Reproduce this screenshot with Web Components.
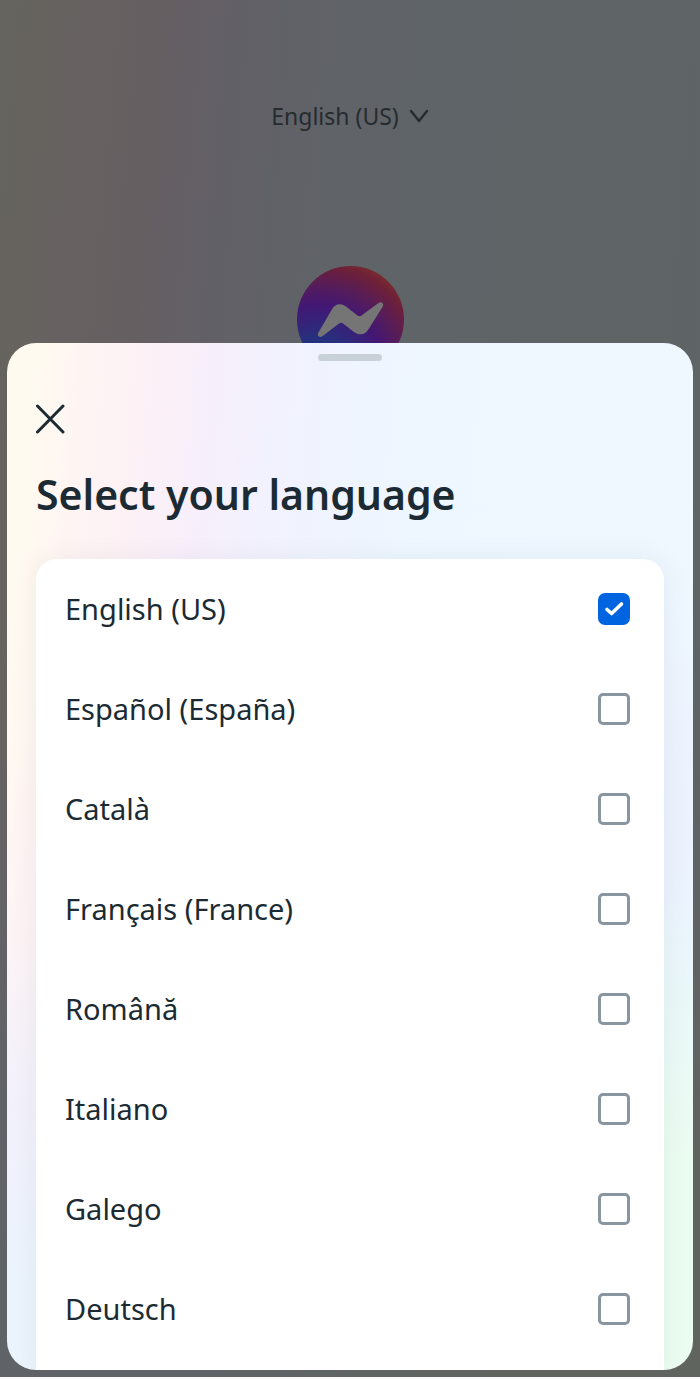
<!DOCTYPE html>
<html lang="en">
<head>
<meta charset="utf-8">
<meta name="viewport" content="width=device-width, initial-scale=1">
<title>Select your language</title>
<style>
body { margin: 0; background: #fafafa; color: #1c2b33; font-family: "Noto Sans", sans-serif; }
</style>
</head>
<body>
<language-screen>
  <login-backdrop slot="backdrop" locale="English (US)"></login-backdrop>
  <bottom-sheet heading="Select your language">
    <language-list>
      <language-option lang="en" checked>English (US)</language-option>
      <language-option lang="es">Español (España)</language-option>
      <language-option lang="ca">Català</language-option>
      <language-option lang="fr">Français (France)</language-option>
      <language-option lang="ro">Română</language-option>
      <language-option lang="it">Italiano</language-option>
      <language-option lang="gl">Galego</language-option>
      <language-option lang="de">Deutsch</language-option>
    </language-list>
  </bottom-sheet>
</language-screen>
<script>
class BaseElement extends HTMLElement {
  render(html) {
    const t = document.createElement('template');
    t.innerHTML = html;
    this.attachShadow({ mode: 'open' }).append(t.content.cloneNode(true));
  }
}

customElements.define('language-screen', class extends BaseElement {
  connectedCallback() {
    this.render(`
      <style>
        :host { display: grid; grid-template-columns: minmax(0, 1fr); }
        ::slotted(*), .overlay { grid-area: 1 / 1; }
        .overlay { z-index: 1; display: flex; flex-direction: column; padding: 343px 7px 7px; }
      </style>
      <slot name="backdrop"></slot>
      <div class="overlay"><slot></slot></div>`);
  }
});

customElements.define('login-backdrop', class extends BaseElement {
  connectedCallback() {
    this.render(`
      <style>
        :host { display: flex; flex-direction: column; align-items: center; gap: 133px; padding-top: 99px;
          background:
            radial-gradient(ellipse 500px 550px at 100% 100%, #5f645f 0%, #5f645f 40%, #5f645f00 100%),
            linear-gradient(to bottom, #61626700 50%, #616267 75%, #5f6367 95%),
            linear-gradient(95deg, #65645e 0%, #66635f 6%, #676161 12%, #665f62 20%, #636067 27%, #606267 37%, #5f6468 52%, #5e6365 100%); }
        button { display: flex; align-items: center; gap: 10px; border: 0; padding: 0; background: none;
          color: #262b30; font: inherit; font-size: 23px; line-height: 34px; }
        svg { display: block; }
      </style>
      <button type="button"><span></span>
        <svg width="20" height="14" viewBox="0 0 20 14" fill="none" stroke="currentColor" stroke-width="2.4" stroke-linecap="round" stroke-linejoin="round" aria-hidden="true"><path d="M2 2l8 10L18 2"/></svg>
      </button>
      <svg width="107" height="107" viewBox="0 0 107 107" role="img" aria-label="Messenger">
        <defs>
          <radialGradient id="g" gradientUnits="userSpaceOnUse" cx="20" cy="106" r="118">
            <stop offset="0" stop-color="#143a80"/><stop offset=".3" stop-color="#282f7d"/>
            <stop offset=".57" stop-color="#431774"/><stop offset=".72" stop-color="#541c5c"/>
            <stop offset=".9" stop-color="#6d2039"/><stop offset="1" stop-color="#7a2d2c"/>
          </radialGradient>
        </defs>
        <circle cx="53.5" cy="53.5" r="53.5" fill="url(#g)"/>
        <path fill="#757575" d="M21.500 66.500L34.500 44C37.500 38 43.500 36.500 49 40.500L60.500 49.500Q62.500 51 64.500 49.500L81.500 37C84 35 87.500 37.500 85.500 41L72 62.500C68.500 69 62.500 70 57 66L46 57.500Q44 56 42 57.500L25 70.500C22.500 72 19.500 69.500 21.500 66.500Z"/>
      </svg>`);
    this.shadowRoot.querySelector('span').textContent = this.getAttribute('locale');
  }
});

customElements.define('bottom-sheet', class extends BaseElement {
  connectedCallback() {
    this.render(`
      <style>
        :host { display: block; overflow: hidden; border-radius: 29px;
          background:
            radial-gradient(ellipse 300px 480px at 100% 100%, #ebfcf1 0%, #ebfcf1 45%, #ebfcf100 100%),
            linear-gradient(to bottom, #fdf2f600 35%, #fdf2f6b0 56%, #f2f1fc 75%, #ebf4fd 92%) 0 0 / 50% 100% no-repeat,
            linear-gradient(to bottom, #ecf2fe00 20%, #ecf2fe 45%, #eaf5fe 65%) 100% 0 / 50% 100% no-repeat,
            linear-gradient(95deg, #fffaf0 4%, #fef5f3 10%, #fdf1f5 17%, #f7effb 26%, #f1f2fe 36%, #eef6ff 52%, #eff8ff 100%); }
        section { display: flex; flex-direction: column; padding: 11px 29px 0; }
        .grip { align-self: center; width: 64px; height: 7px; border-radius: 4px; background: #c9d1d8; }
        button { align-self: flex-start; margin-top: 43px; padding: 0; border: 0; background: none; color: inherit; }
        svg { display: block; }
        h1 { margin: 31px 0 36px; font-size: 41px; line-height: 58px; font-weight: 600; }
      </style>
      <section aria-labelledby="title">
        <div class="grip"></div>
        <button type="button" aria-label="Close">
          <svg width="30" height="30" viewBox="0 0 30 30" fill="none" stroke="currentColor" stroke-width="3" stroke-linecap="round"><path d="M1.500 2l25.500 26M27 2L1.500 28"/></svg>
        </button>
        <h1 id="title"></h1>
        <slot></slot>
      </section>`);
    this.shadowRoot.querySelector('h1').textContent = this.getAttribute('heading');
  }
});

customElements.define('language-list', class extends BaseElement {
  connectedCallback() {
    this.render(`
      <style>
        :host { display: flex; flex-direction: column; padding-bottom: 11px; background: #fff;
          border-radius: 21px 21px 0 0; box-shadow: 0 0 28px #1c2b3310; }
      </style>
      <slot></slot>`);
  }
});

customElements.define('language-option', class extends BaseElement {
  connectedCallback() {
    this.render(`
      <style>
        :host { display: block; }
        label { display: flex; align-items: center; justify-content: space-between; height: 100px; padding: 0 34px 0 29px;
          font-size: 29px; line-height: 40px; font-weight: 450; }
        input { appearance: none; box-sizing: border-box; width: 32px; height: 32px; margin: 0; border: 3px solid #8a969f; border-radius: 5px; }
        input:checked { border-color: #0064e0; background: #0064e0; border-radius: 7px; }
        .box { display: grid; }
        .box > * { grid-area: 1 / 1; place-self: center; }
        svg { pointer-events: none; visibility: hidden; }
        input:checked + svg { visibility: visible; }
      </style>
      <label><slot></slot>
        <span class="box"><input type="checkbox">
          <svg width="32" height="32" viewBox="0 0 32 32" fill="none" stroke="#fff" stroke-width="3.6" stroke-linecap="round" stroke-linejoin="round" aria-hidden="true"><path d="M9 16.500l4.600 4L23.500 11"/></svg>
        </span>
      </label>`);
    this.shadowRoot.querySelector('input').checked = this.hasAttribute('checked');
  }
});
</script>
</body>
</html>
